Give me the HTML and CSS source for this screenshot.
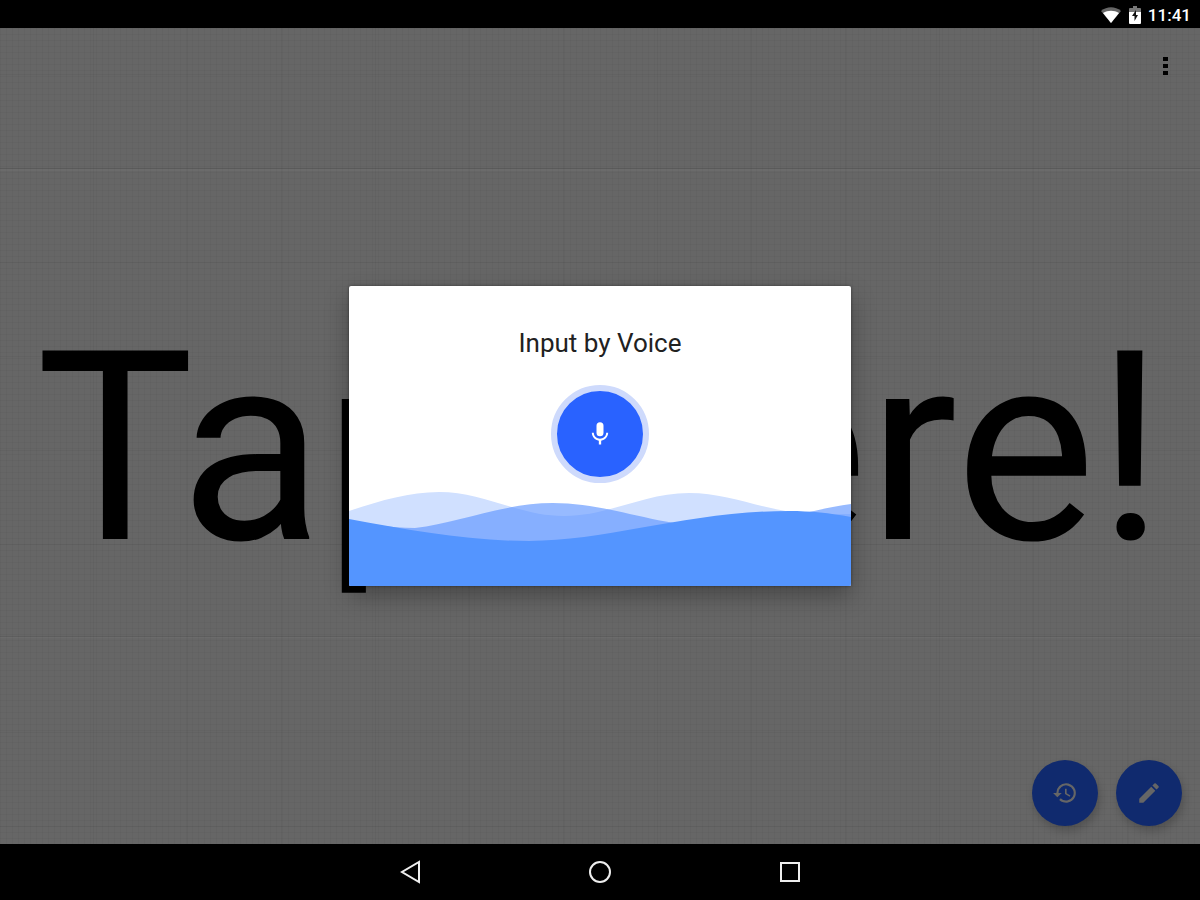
FILE: index.html
```html
<!DOCTYPE html>
<html lang="en">
<head>
  <meta charset="UTF-8">
  <meta name="viewport" content="width=device-width, initial-scale=1.0">
  <title>Tap Here!</title>
  <link rel="stylesheet" href="styles.css">
</head>

<body>
  <header class="status-bar">
    <svg class="status-icon wifi" viewBox="0 0 20 16" aria-hidden="true">
      <path fill="#666" d="M10 16 0 4C6-1 14-1 20 4z"/>
      <path fill="#fff" d="M10 16 2 6C7 3 13 3 18 6z"/>
    </svg>
    <svg class="status-icon battery" viewBox="0 0 12 18" aria-hidden="true">
      <path fill="#777" d="M4 0h4v2h3q1 0 1 1v6H0V3q0-1 1-1h3z"/>
      <path fill="#fff" d="M0 6h12v11q0 1-1 1H1q-1 0-1-1z"/>
      <path fill="#111" d="M7 4 3 10h2.500v5L9 9H7z"/>
    </svg>
    <time class="clock">11:41</time>
  </header>

  <main class="board">
    <div class="toolbar">
      <button class="menu-button" type="button" aria-label="More options">
        <span class="dot"></span>
        <span class="dot"></span>
        <span class="dot"></span>
      </button>
    </div>

    <h1 class="message">Tap Here!</h1>

    <div class="actions">
      <button class="fab" type="button" aria-label="History">
        <svg viewBox="0 0 24 24" aria-hidden="true">
          <path d="M13 3a9 9 0 0 0-9 9H1l3.890 3.890.07.14L9 12H6a7 7 0 1 1 2.060 4.940l-1.420 1.420A9 9 0 1 0 13 3zm-1 5v5l4.280 2.540.72-1.210-3.500-2.080V8z"/>
        </svg>
      </button>
      <button class="fab" type="button" aria-label="Edit">
        <svg viewBox="0 0 24 24" aria-hidden="true">
          <path d="M3 17.250V21h3.750L17.810 9.940l-3.750-3.750zM20.710 7.040a1 1 0 0 0 0-1.410l-2.340-2.340a1 1 0 0 0-1.410 0l-1.830 1.830 3.750 3.750z"/>
        </svg>
      </button>
    </div>

    <div class="overlay">
      <section class="voice-dialog" role="dialog" aria-labelledby="voice-title">
        <h2 class="voice-title" id="voice-title">Input by Voice</h2>
        <button class="mic-button" type="button" aria-label="Start voice input">
          <svg viewBox="0 0 24 24" aria-hidden="true">
            <path d="M12 14a3 3 0 0 0 3-3V5a3 3 0 0 0-6 0v6a3 3 0 0 0 3 3zm5.300-3c0 3-2.540 5.100-5.300 5.100S6.700 14 6.700 11H5c0 3.410 2.720 6.230 6 6.720V21h2v-3.280c3.280-.48 6-3.300 6-6.720z"/>
          </svg>
        </button>
        <svg class="waves" viewBox="0 0 502 96" preserveAspectRatio="none" aria-hidden="true">
          <path fill="#d0e0ff" d="M0 21C30 11 60 2 90 2C135 2 170 26 215 26C260 26 295 3 340 3C385 3 420 24 470 24H502V96H0z"/>
          <path fill="#5c93ff" fill-opacity=".64" d="M0 30C20 34 40 38 66 38C110 33 155 13 204 13C260 13 310 37 370 37C420 37 455 20 502 14V96H0z"/>
          <path fill="#5495ff" d="M0 29C60 40 120 51 180 51C260 51 340 21 440 21C462 21 480 23 502 27V96H0z"/>
        </svg>
      </section>
    </div>
  </main>

  <nav class="nav-bar" aria-label="System navigation">
    <button class="nav-button" type="button" aria-label="Back">
      <svg viewBox="0 0 24 24" aria-hidden="true"><path d="M21 2v20L4 12z"/></svg>
    </button>
    <button class="nav-button" type="button" aria-label="Home">
      <svg viewBox="0 0 24 24" aria-hidden="true"><circle cx="12" cy="12" r="10"/></svg>
    </button>
    <button class="nav-button" type="button" aria-label="Recent apps">
      <svg viewBox="0 0 24 24" aria-hidden="true"><rect x="3" y="3" width="18" height="18"/></svg>
    </button>
  </nav>
</body>
</html>
```
FILE: styles.css
```css
* {
  box-sizing: border-box;
  margin: 0;
  padding: 0;
}

body {
  display: flex;
  flex-direction: column;
  min-height: 100vh;
  background-color: #000;
  font-family: Roboto, "Liberation Sans", sans-serif;
}

button {
  border: none;
  cursor: pointer;
}

/* status bar */
.status-bar {
  display: flex;
  justify-content: flex-end;
  align-items: center;
  height: 28px;
  padding: 2px 9px 0 0;
  color: #fff;
}

.status-icon {
  display: block;
}

.wifi {
  width: 20px;
  height: 16px;
  margin-right: 8px;
}

.battery {
  width: 12px;
  height: 18px;
  margin-right: 7px;
}

.clock {
  font-size: 17px;
  font-weight: 500;
  line-height: 24px;
}

/* board */
.board {
  position: relative;
  flex: 1;
  display: flex;
  flex-direction: column;
  justify-content: space-between;
  background-color: #666;
  background-image:
    linear-gradient(rgba(0, 0, 0, 0.08) 1px, rgba(255, 255, 255, 0.03) 1px, rgba(255, 255, 255, 0.03) 3px, transparent 3px),
    linear-gradient(rgba(0, 0, 0, 0.04) 1px, transparent 1px),
    linear-gradient(90deg, rgba(0, 0, 0, 0.04) 1px, transparent 1px),
    linear-gradient(rgba(0, 0, 0, 0.03) 1px, transparent 1px),
    linear-gradient(90deg, rgba(0, 0, 0, 0.03) 1px, transparent 1px);
  background-size: 468px 468px, 94px 94px, 94px 94px, 6px 6px, 6px 6px;
  background-position: 0 140px, 0 46px, -1px 0, 0 0, 0 0;
}

.toolbar {
  display: flex;
  justify-content: flex-end;
  padding: 18px 15px 70px;
}

.menu-button {
  display: flex;
  flex-direction: column;
  align-items: center;
  justify-content: center;
  gap: 3px;
  width: 40px;
  height: 40px;
  background: none;
}

.dot {
  width: 5px;
  height: 4px;
  background-color: #000;
}

.message {
  color: #000;
  font-size: 265px;
  font-weight: 400;
  line-height: 312px;
  text-align: center;
  white-space: nowrap;
}

.actions {
  display: flex;
  justify-content: flex-end;
  gap: 18px;
  padding: 18px;
}

.fab {
  display: flex;
  align-items: center;
  justify-content: center;
  width: 66px;
  height: 66px;
  border-radius: 50%;
  background-color: #102a6e;
  box-shadow: 2px 5px 8px rgba(0, 0, 0, 0.2);
}

.fab svg {
  width: 26px;
  height: 26px;
  fill: #666;
}

/* voice dialog */
.overlay {
  position: absolute;
  inset: 0;
  display: flex;
  align-items: center;
  justify-content: center;
}

.voice-dialog {
  display: flex;
  flex-direction: column;
  align-items: center;
  width: 502px;
  max-width: 90%;
  padding-top: 41px;
  border-radius: 2px;
  background-color: #fff;
  box-shadow: 0 10px 24px rgba(0, 0, 0, 0.3), 0 0 3px rgba(0, 0, 0, 0.4);
  overflow: hidden;
}

.voice-title {
  color: #212121;
  font-size: 26px;
  font-weight: 400;
  line-height: 32px;
}

.mic-button {
  display: flex;
  align-items: center;
  justify-content: center;
  width: 98px;
  height: 98px;
  margin: 26px 0 7px;
  border: 6px solid #cedafc;
  border-radius: 50%;
  background-color: #2962ff;
}

.mic-button svg {
  width: 28px;
  height: 28px;
  fill: #fff;
}

.waves {
  display: block;
  width: 100%;
  height: 96px;
}

/* navigation bar */
.nav-bar {
  display: flex;
  justify-content: center;
  align-items: center;
  gap: 134px;
  height: 56px;
}

.nav-button {
  display: flex;
  align-items: center;
  justify-content: center;
  width: 56px;
  height: 56px;
  background: none;
}

.nav-button svg {
  width: 24px;
  height: 24px;
  fill: none;
  stroke: #eee;
  stroke-width: 2;
}
```
